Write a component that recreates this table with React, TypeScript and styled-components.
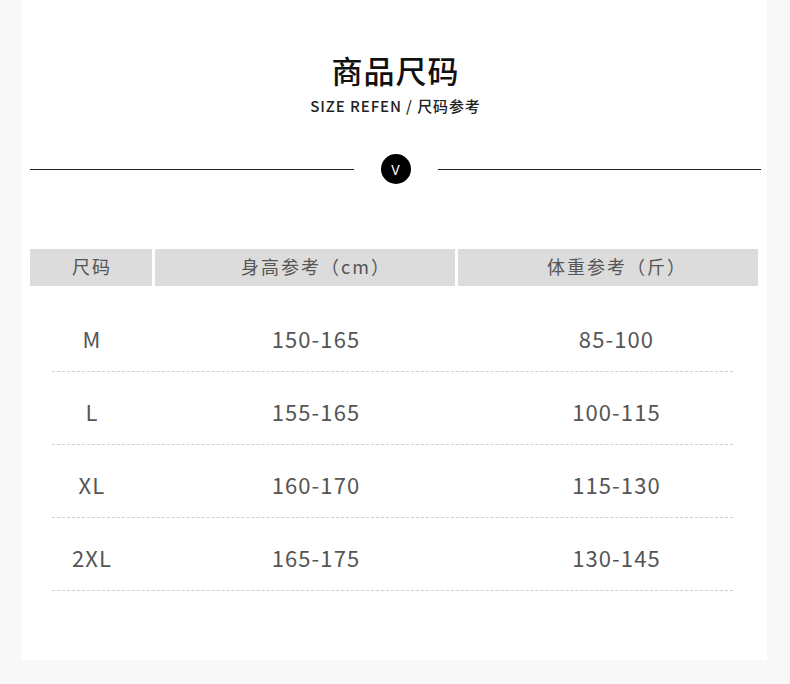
import React from "react";
import styled, { createGlobalStyle } from "styled-components";

const Global = createGlobalStyle`
  html, body { margin: 0; padding: 0; background: #f8f8f8; }
  body { font-family: "Noto Sans CJK SC", "Noto Sans", sans-serif; }
`;

const Page = styled.div`
  width: 790px;
  height: 684px;
  background: #f8f8f8;
  padding-left: 21px;
  box-sizing: border-box;
`;

const Card = styled.div`
  width: 746px;
  height: 660px;
  background: #ffffff;
  padding: 50px 6px 0 9px;
  box-sizing: border-box;
  display: flex;
  flex-direction: column;
`;

const Title = styled.h1`
  margin: 0;
  font-size: 31px;
  line-height: 40px;
  font-weight: 500;
  color: #111;
  text-align: center;
  letter-spacing: 1px;
`;

const Subtitle = styled.div`
  margin-top: 6px;
  font-size: 15px;
  line-height: 20px;
  font-weight: 500;
  color: #222;
  text-align: center;
  letter-spacing: 0.9px;
`;

const Divider = styled.div`
  margin-top: 38px;
  display: flex;
  align-items: center;
  gap: 27px;
  height: 30px;
`;

const Line = styled.div`
  flex: 1;
  height: 1px;
  background: #222;
`;

const Badge = styled.div`
  width: 30px;
  height: 30px;
  border-radius: 50%;
  background: #000;
  color: #fff;
  font-size: 14px;
  font-weight: 400;
  display: flex;
  align-items: center;
  justify-content: center;
  font-family: "Noto Sans", sans-serif;
`;

const HeaderRow = styled.div`
  margin-top: 65px;
  margin-right: 3px;
  display: grid;
  grid-template-columns: 122px 300px 300px;
  gap: 3px;
  height: 37px;
`;

const HeaderCell = styled.div<{ $shift?: number }>`
  background: #dcdcdc;
  color: #555;
  font-size: 18px;
  letter-spacing: 2px;
  padding-left: ${(p) => (p.$shift ?? 1) * 2}px;
  line-height: 35px;
  display: flex;
  align-items: flex-start;
  justify-content: center;
`;

const Body = styled.div`
  margin-top: 13px;
  margin-left: 22px;
  width: 681px;
`;

const Row = styled.div`
  display: grid;
  grid-template-columns: 80px 368px 233px;
  height: 73px;
  box-sizing: border-box;
  padding-top: 24px;
  border-bottom: 1px dashed #cfcfcf;
`;

const Cell = styled.div`
  font-size: 22px;
  line-height: 30px;
  color: #555;
  text-align: center;
  letter-spacing: 1.1px;
`;

const rows = [
  ["M", "150-165", "85-100"],
  ["L", "155-165", "100-115"],
  ["XL", "160-170", "115-130"],
  ["2XL", "165-175", "130-145"],
];

export default function App() {
  return (
    <Page>
      <Global />
      <Card>
        <Title>商品尺码</Title>
        <Subtitle>SIZE REFEN / 尺码参考</Subtitle>
        <Divider>
          <Line />
          <Badge>V</Badge>
          <Line />
        </Divider>
        <HeaderRow>
          <HeaderCell>尺码</HeaderCell>
          <HeaderCell $shift={11}>身高参考（cm）</HeaderCell>
          <HeaderCell $shift={9}>体重参考（斤）</HeaderCell>
        </HeaderRow>
        <Body>
          {rows.map((r) => (
            <Row key={r[0]}>
              {r.map((c, i) => (
                <Cell key={i}>{c}</Cell>
              ))}
            </Row>
          ))}
        </Body>
      </Card>
    </Page>
  );
}
